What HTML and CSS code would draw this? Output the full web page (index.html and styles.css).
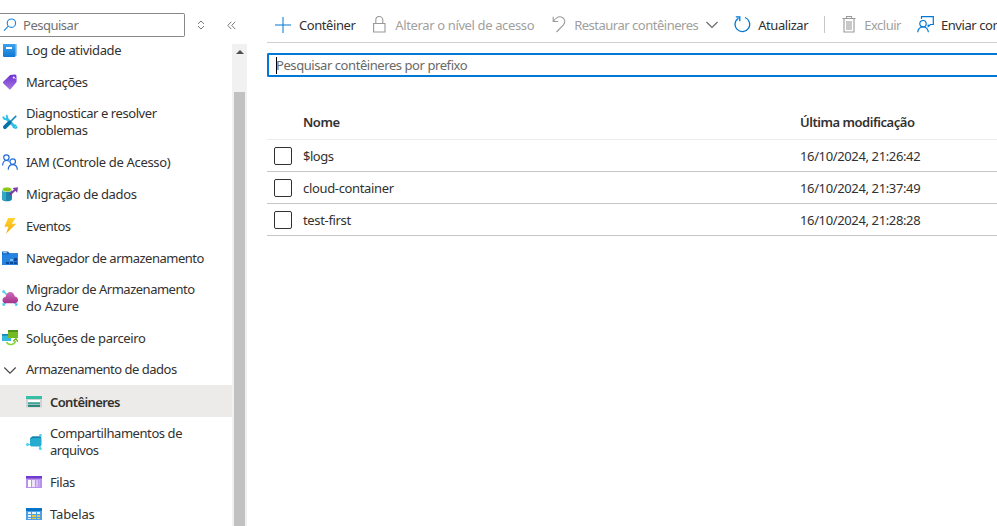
FILE: index.html
```html
<!DOCTYPE html>
<html lang="pt-BR">
<head>
<meta charset="utf-8">
<title>Contêineres</title>
<link rel="stylesheet" href="styles.css">
</head>
<body>
<div class="app">
  <aside class="side">
    <div class="side-head">
      <div class="menu-search">
        <svg class="search-icon" width="14" height="14" viewBox="0 0 14 14" fill="none" stroke="#1683dc" stroke-width="1.1"><circle cx="8.4" cy="5.2" r="4.2"/><path d="M5.4 8.2 1 12.6"/></svg>
        <span class="tight">Pesquisar</span>
      </div>
      <svg class="sort" width="8" height="10" viewBox="0 0 8 10" fill="none" stroke="#777" stroke-width="1"><path d="M1 3.900 4 1l3 2.900M1 6.100 4 9l3-2.900"/></svg>
      <svg class="collapse" width="9" height="9" viewBox="0 0 9 9" fill="none" stroke="#777" stroke-width="1"><path d="M4.300.8.8 4.400l3.500 3.700M8.200.8 4.700 4.400l3.500 3.700"/></svg>
    </div>
    <div class="side-body">
      <nav class="menu">
        <a class="item"><svg class="ico" viewBox="0 0 16 16"><defs><linearGradient id="lb" x1="0" y1="0" x2="0" y2="1"><stop offset="0" stop-color="#41a5ee"/><stop offset="1" stop-color="#0f78d4"/></linearGradient></defs><rect x="3" y="1" width="12" height="13" rx="1" fill="#9cc9f0"/><rect x="1" y="1" width="12.500" height="14" rx="1" fill="url(#lb)"/><rect x="4" y="5" width="6" height="2" fill="#fff"/></svg><span class="loose">Log de atividade</span></a>
        <a class="item"><svg class="ico" viewBox="0 0 16 16"><defs><linearGradient id="tg" x1="0" y1="0" x2="0" y2="1"><stop offset="0" stop-color="#6a2fd0"/><stop offset="1" stop-color="#a878e4"/></linearGradient></defs><path d="M8.200 1 13 .5q1.600.2 1.500 2L14.600 8 8.600 15.300q-.7.5-1.300 0L1.200 9.200q-.6-.8 0-1.500z" fill="url(#tg)"/><circle cx="11.700" cy="3.600" r="1" fill="#fff"/><path d="m11.700 3.600 2.300 1" stroke="#d7bef6" stroke-width=".8"/></svg><span>Marcações</span></a>
        <a class="item two"><svg class="ico" viewBox="0 0 16 16" fill="none"><path d="M4 4 13 13" stroke="#31bfe5" stroke-width="3"/><path d="M1.200 2.500q.5 3 3.300 2.800Q6.300 3.500 4.300 1.200" stroke="#31bfe5" stroke-width="1.800"/><path d="m10.800 13 3.800 1.500M13 10.600l2.200 3.300" stroke="#31bfe5" stroke-width="1.500"/><path d="m7.500 8.600 6.700-6.700" stroke="#1786bd" stroke-width="1.500"/><path d="m2.900 13.200 4.600-4.600" stroke="#086fa8" stroke-width="3.800" stroke-linecap="round"/></svg><span>Diagnosticar e resolver<br>problemas</span></a>
        <a class="item"><svg class="ico" viewBox="0 0 16 16" fill="none" stroke="#1c6bdb" stroke-width="1.200"><circle cx="4.400" cy="3.600" r="2.700"/><path d="M.6 11.500C.7 8.200 2.300 6.500 4.600 6.500q1.500 0 2.500.9"/><circle cx="10.700" cy="7.600" r="2.800"/><path d="M6.200 15.700c.1-3.400 1.800-5.100 4.500-5.100s4.500 1.700 4.700 5.100"/></svg><span class="loose">IAM (Controle de Acesso)</span></a>
        <a class="item"><svg class="ico" viewBox="0 0 16 16"><path d="M0 3.500v9.200c0 3.500 10 3.500 10 0V3.500z" fill="#1c86ad"/><path d="M0 3.500v9.200q.5 1.800 4 2.300V4z" fill="#31a7ca"/><ellipse cx="5" cy="3.500" rx="5" ry="2.500" fill="#dff1cb"/><ellipse cx="5" cy="3.500" rx="4" ry="1.900" fill="#8bc710"/><path d="m7.300 9.300 5.700-5.600" stroke="#7e3da5" stroke-width="1.900"/><path d="M10.500 2 16 1.200l-.8 5.500z" fill="#7e3da5"/></svg><span class="loose">Migração de dados</span></a>
        <a class="item"><svg class="ico" viewBox="0 0 16 16"><defs><linearGradient id="ev" x1="0" y1="0" x2="0" y2="1"><stop offset="0" stop-color="#ffd52b"/><stop offset="1" stop-color="#f9a70e"/></linearGradient></defs><path d="M6 0h7.600L9.700 5.700h4.500L4 15.700l2.500-7H2.400z" fill="url(#ev)"/></svg><span class="tight">Eventos</span></a>
        <a class="item"><svg class="ico" viewBox="0 0 16 16"><path d="M0 1.500h6l1.500 1.700H16V15H0z" fill="#1465c2"/><path d="M0 4.500h6.500L8 3.500h8V15H0z" fill="#2783e0"/><rect x="1" y="2.200" width="4" height="1" fill="#a9d8fa"/><path d="M4 12h3v2H4zM8 12h3v2H8zM12 12h3v2h-3zM12 8h3v3h-3z" fill="#0b4a9b"/><path d="M8 9h3v2H8z" fill="#78bdf3"/></svg><span class="tight">Navegador de armazenamento</span></a>
        <a class="item two"><svg class="ico" viewBox="0 0 16 16"><defs><linearGradient id="cl" x1="0" y1="0" x2="0" y2="1"><stop offset="0" stop-color="#d06bb7"/><stop offset="1" stop-color="#a3348a"/></linearGradient></defs><path d="m.8.800 4 4M1 15.200l4-4M15 15.200l-4-4" stroke="#42cae9" stroke-width="1.500"/><path d="M1 3V1h2M1 13v2.200h2.200M15 13v2.200h-2.200" fill="none" stroke="#42cae9"/><path d="M4 13.300C-.6 13.300-.5 7.300 3.500 7 4.500.3 12 .2 12.800 6.600c4.400.5 4.300 6.700-.3 6.700z" fill="url(#cl)"/></svg><span><span class="tight">Migrador de Armazenamento</span><br><span class="wide">do Azure</span></span></a>
        <a class="item"><svg class="ico" viewBox="0 0 16 16"><path d="M0 4h9v7H0z" fill="#36b9de"/><path d="M0 4h9v1.700H0z" fill="#1688ba"/><path d="M6 0h10v8H6z" fill="#72bb25"/><path d="M6 0h10v2H6z" fill="#549315"/><path d="M4.500 12.300c2.200 3.300 8 3 9-1.500" fill="none" stroke="#86d633" stroke-width="1.600"/><path d="m11.200 11.300 2.700-2.700 2 3.300" fill="none" stroke="#69b51e" stroke-width="1.300"/></svg><span class="loose">Soluções de parceiro</span></a>
        <a class="item group"><svg class="ico" viewBox="0 0 16 16" fill="none" stroke="#444" stroke-width="1.100"><path d="m2.300 5.500 5.700 5.700 5.700-5.700"/></svg><span class="tight">Armazenamento de dados</span></a>
        <a class="item sub active"><svg class="ico" viewBox="0 0 16 16"><path d="M0 2h16v3H0z" fill="#35c0a5"/><path d="M0 5h16v8.500H0z" fill="#d0d2d3"/><path d="M2 6h12v2H2z" fill="#fff"/><path d="M2 8.300h12v1.900H2z" fill="#38a89a"/><path d="M2 10.900h12v2H2z" fill="#258477"/></svg><span>Contêineres</span></a>
        <a class="item sub two"><svg class="ico" viewBox="0 0 16 16"><path d="M1 10.500h5M14.300 1v4M14 11v4" stroke="#49c9e9" stroke-width="1.200"/><path d="M4 4.300 6.500 2.500h7.200q1.800.3 1.800 2v6q-.2 1.900-1.800 2.100H5.600q-1.600-.2-1.600-2z" fill="#26abd1"/><path d="M4 4.300 6.500 2.500h7.200q1.300.2 1.700 1.500H9z" fill="#167ea7"/><circle cx="1.500" cy="10.500" r="1.500" fill="#49d3f1"/><circle cx="14.400" cy="1.400" r="1.400" fill="#49d3f1"/><circle cx="14.300" cy="14.500" r="1.500" fill="#49d3f1"/></svg><span>Compartilhamentos de<br><span class="tight">arquivos</span></span></a>
        <a class="item sub"><svg class="ico" viewBox="0 0 16 16"><path d="M0 2h16v12H0z" fill="#ba91ed"/><path d="M0 2h16v2.500H0z" fill="#7139cd"/><path d="M2 6h3v7H2z" fill="#fff"/><path d="M6 6h3v7H6z" fill="#eee3fb"/><path d="M10 6h2v7h-2z" fill="#d7bff5"/><path d="M12.500 6H14v7h-1.500z" fill="#c6a6f1"/></svg><span>Filas</span></a>
        <a class="item sub"><svg class="ico" viewBox="0 0 16 16"><path d="M0 2h16v12H0z" fill="#4d9fe6"/><path d="M0 2h16v3H0z" fill="#0872c7"/><path d="M2 6h3v2H2zM6 6h4v2H6zM11 6h3v2h-3zM2 9h3v2H2zM2 12h3v1H2z" fill="#e0f0fc"/><path d="M6 9h4v2H6zM11 9h3v2h-3zM6 12h4v1H6zM11 12h3v1h-3z" fill="#e8c736"/></svg><span class="wide">Tabelas</span></a>
      </nav>
      <div class="scrollbar"><div class="arrow"></div><div class="thumb"></div></div>
    </div>
  </aside>
  <main class="main">
    <div class="toolbar">
      <button class="cmd c-new"><svg width="16" height="16" viewBox="0 0 16 16" fill="none" stroke="#0078d4" stroke-width="1"><path d="M8 0v16M0 8h16"/></svg><span>Contêiner</span></button>
      <button class="cmd off c-level"><svg width="14" height="17" viewBox="0 0 14 17" fill="none" stroke="#999" stroke-width="1.100"><path d="M.6 7.500h11.400v8.500H.6zM2.800 7.500V4a3.500 3.500 0 0 1 7 0v3.500"/></svg><span>Alterar o nível de acesso</span></button>
      <button class="cmd off c-restore"><svg width="14" height="17" viewBox="0 0 14 17" fill="none" stroke="#999" stroke-width="1.100"><path d="M1.200.8v4.700h5M1.500 5.200C4.500 1 8 .1 10.500 1.500c2.700 1.800 3 5 .9 7.300L4.500 16"/></svg><span class="tight">Restaurar contêineres</span><svg class="down" width="12" height="8" viewBox="0 0 12 8" fill="none" stroke="#666" stroke-width="1.100"><path d="m.5 1 5.500 5.500L11.500 1"/></svg></button>
      <button class="cmd c-refresh"><svg width="17" height="17" viewBox="0 0 17 17" fill="none" stroke="#0078d4" stroke-width="1.300"><path d="M11 1.500a7.300 7.300 0 1 1-6.500.6M1.800.8h4v4.500"/></svg><span>Atualizar</span></button>
      <i class="sep"></i>
      <button class="cmd off c-delete"><svg width="14" height="17" viewBox="0 0 14 17" fill="none" stroke="#999" stroke-width="1.100"><path d="M.5 2.500h13M4.500 2.500v-2h5v2M2 2.500V16h10V2.500"/><path d="M4 5h6v9H4z" fill="#c8c8c8" stroke="none"/></svg><span class="tight">Excluir</span></button>
      <button class="cmd c-send"><svg width="17" height="17" viewBox="0 0 17 17" fill="none" stroke="#0078d4" stroke-width="1.200"><circle cx="6" cy="7.700" r="3.200"/><path d="M.7 16.300C1 13 3 11 6 11s5 2 5.400 5.300M4.500 3V.7h11.800v7.800h-2.800l-2.300 2v-2"/></svg><span>Enviar comentários</span></button>
    </div>
    <div class="filter"><i class="caret"></i><span>Pesquisar contêineres por prefixo</span></div>
    <div class="table">
      <div class="row head"><span></span><span>Nome</span><span>Última modificação</span></div>
      <div class="row"><i class="check"></i><span class="tight">$logs</span><span class="date">16/10/2024, 21:26:42</span></div>
      <div class="row"><i class="check"></i><span class="loose">cloud-container</span><span class="date">16/10/2024, 21:37:49</span></div>
      <div class="row"><i class="check"></i><span class="loose">test-first</span><span class="date">16/10/2024, 21:28:28</span></div>
    </div>
  </main>
</div>
</body>
</html>
```

FILE: styles.css
```css
* { box-sizing: border-box; }
body { margin: 0; background: #fff; color: #323130; font: 13px/17px "Noto Sans", sans-serif; letter-spacing: -0.43px; }
svg { display: block; flex: none; }
.tight { letter-spacing: -0.49px; }
.loose { letter-spacing: -0.34px; }
.wide { letter-spacing: -0.15px; }
.app { display: flex; width: 100vw; height: 100vh; overflow: hidden; }

.side { width: 247px; flex: none; display: flex; flex-direction: column; }
.side-head { height: 44px; flex: none; display: flex; padding-top: 13px; }
.menu-search { width: 185px; height: 24px; flex: none; display: flex; align-items: center; border: 1px solid #8a8886; border-left: 0; border-radius: 0 2px 2px 0; padding-left: 3px; color: #727170; }
.search-icon { margin-right: 6px; }
.sort { margin: 7px 0 0 12px; }
.sort + .collapse { margin: 8px 0 0 22px; }
.side-body { flex: 1; min-height: 0; display: flex; overflow: hidden; }
.menu { width: 232px; flex: none; margin-top: -10px; }
.item { display: flex; align-items: center; height: 32px; padding-left: 2px; white-space: nowrap; }
.item.two { height: 48px; }
.item.group { height: 31px; }
.item.sub { padding-left: 26px; }
.ico { width: 16px; height: 16px; margin-right: 8px; }
.active { background: #edebe9; font-weight: 600; letter-spacing: -0.6px; padding-top: 2px; }
.active + .item { margin-top: 1px; }
.scrollbar { width: 15px; background: #f1f1f1; display: flex; flex-direction: column; align-items: center; }
.arrow { margin-top: 6px; border: 4px solid transparent; border-top: 0; border-bottom: 4px solid #505050; }
.thumb { margin-top: 38px; width: 11px; flex: 1; background: #c1c1c1; }

.main { flex: 1; min-width: 0; margin-left: 20px; }
.toolbar { height: 43px; display: flex; align-items: center; padding: 7px 0 0 8px; border-bottom: 1px solid #d2d0ce; overflow: hidden; }
.cmd { display: flex; align-items: center; flex: none; padding: 0; border: 0; background: none; font: inherit; letter-spacing: inherit; color: inherit; white-space: nowrap; }
.cmd svg { margin-right: 8px; }
.cmd span { padding-top: 1px; }
.cmd.off { color: #a19f9d; }
.c-level span { letter-spacing: -0.37px; }
.cmd .down { margin: 1px 0 0 8px; }
.c-level { margin-left: 18px; }
.c-restore { margin-left: 18px; }
.c-refresh { margin-left: 16px; }
.c-refresh svg, .c-send svg { margin-right: 7px; }
.sep { width: 1px; height: 17px; flex: none; margin: 0 17px 0 16px; background: #c8c6c4; }
.c-send { margin-left: 16px; }
.filter { height: 24px; margin-top: 10px; border: 2px solid #0078d4; border-right: 0; border-radius: 2px 0 0 2px; padding-left: 7px; display: flex; align-items: center; color: #6a6967; }
.caret { width: 1px; height: 17px; margin-right: -1px; background: #000; }
.table { margin-top: 28px; }
.row { display: grid; grid-template-columns: 36px 497px 1fr; align-items: center; height: 32px; border-bottom: 1px solid #c8c6c4; }
.row span { padding-top: 2px; }
.date { letter-spacing: -0.37px; }
.head { height: 35px; font-weight: 600; letter-spacing: -0.47px; border-bottom-color: #edebe9; }
.row.head span { padding-top: 0; }
.check { width: 18px; height: 18px; margin-left: 7px; border: 1px solid #323130; border-radius: 2px; }
```
